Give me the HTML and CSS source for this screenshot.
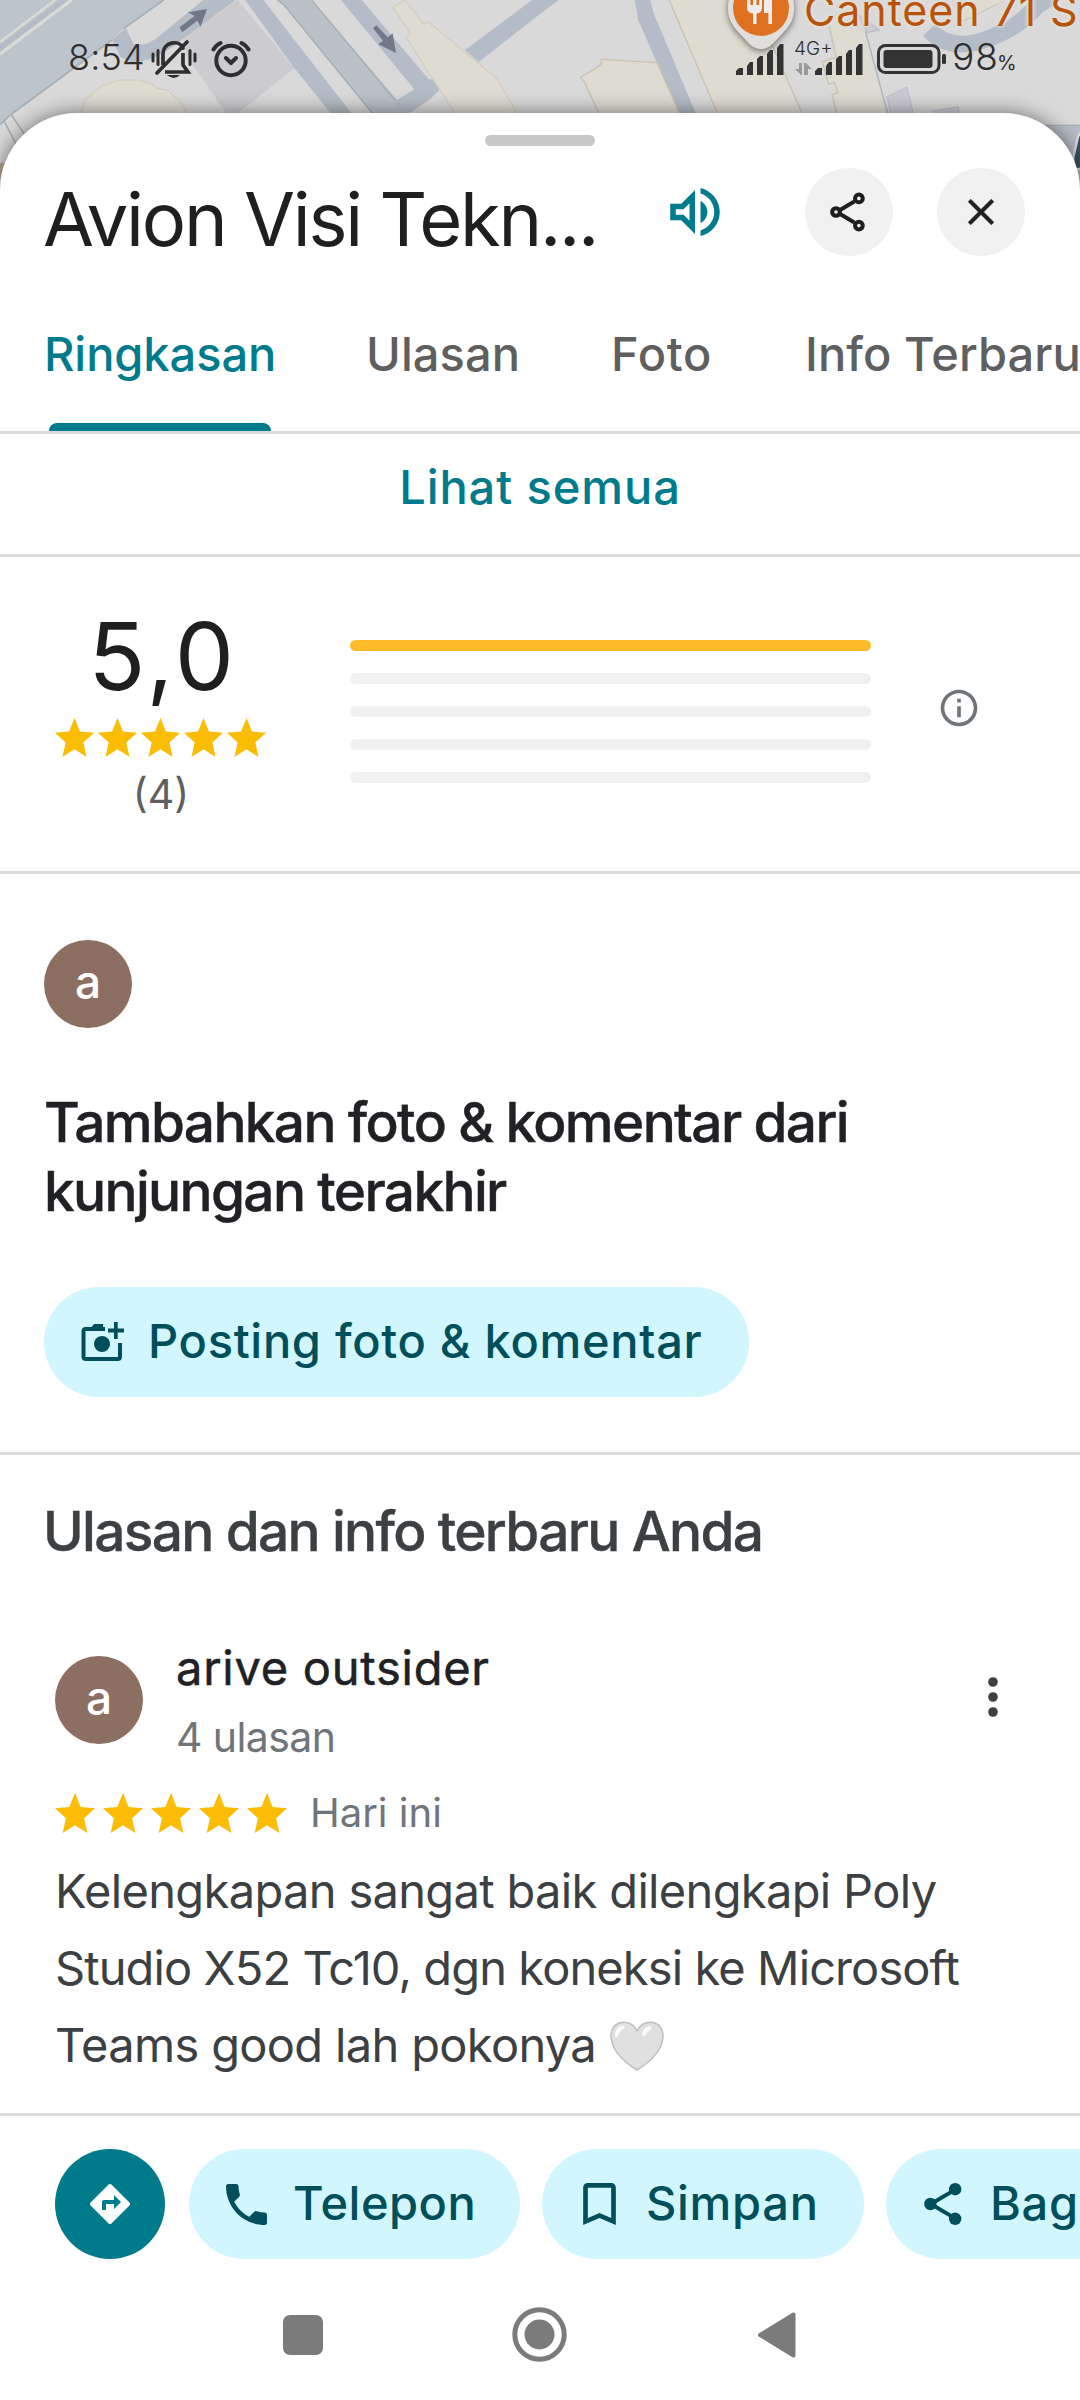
FILE: index.html
```
<!DOCTYPE html>
<html lang="id">
<head>
<meta charset="utf-8">
<title>Avion Visi Teknologi</title>
<link rel="stylesheet" href="styles.css">
</head>
<body>
<svg class="defs" width="0" height="0" aria-hidden="true">
  <defs>
    <symbol id="star" viewBox="2 2 20 19" preserveAspectRatio="none"><path d="M12 17.27L18.18 21l-1.64-7.03L22 9.24l-7.19-.61L12 2 9.19 8.63 2 9.24l5.46 4.73L5.82 21z"/></symbol>
  </defs>
</svg>
<div class="screen">
  <header class="map">
    <svg class="map-canvas" width="1080" height="200" viewBox="0 0 1080 200">
      <rect width="1080" height="200" fill="#d9d9d9"/>
      <g transform="scale(.3444 .3333)">
        <path fill="#bdc5cc" d="M0 0H475L360 85 325 120 30 345 0 372z"/>
        <path d="M475 0L360 85M325 120L30 345 0 374" stroke="#a5b0b5" stroke-width="5" fill="none"/>
        <path d="M0 150L205 -5" stroke="#b4bdc7" stroke-width="26"/>
        <path d="M0 126L160 0" stroke="#dadcda" stroke-width="7"/>
        <path d="M0 162L208 0" stroke="#dadcda" stroke-width="10"/>
        <path fill="#b4bdc7" d="M325 120L365 85 388 132Q425 140 460 110L590 0H685L525 122Q440 190 380 186L350 170z"/>
        <path fill="#cbcbd0" d="M690 0L855 205 690 340H657L540 165 535 115z"/>
        <path fill="#b4bdc7" d="M712 0H765L1022 342H962L855 205z"/>
        <path fill="#bac2c8" d="M805 0H905L1188 342H1083L825 15z"/>
        <path d="M805 0L825 15 1083 342M905 0L1150 305" stroke="#a5afb3" stroke-width="4" fill="none"/>
        <path fill="#b4bdc7" d="M990 0H1050L1245 238H1265L1278 268 1250 296 1185 342 1140 308 1203 268z"/>
        <path fill="#b4bdc7" d="M1350 150L1545 0H1568V42L1390 186z"/>
        <path fill="#dedbd1" stroke="#d3cbb8" stroke-width="3" d="M1175 0L1230 72 1242 65 1442 235 1502 342H1322L1178 110 1192 98 1140 22z"/>
        <path fill="#dedbd1" stroke="#d3cbb8" stroke-width="3" d="M233 342L248 300 295 258 345 240H405L440 252 455 265 485 270 520 302 545 342z"/>
        <path d="M10 360L48 435M34 346L72 405" stroke="#a8b0b5" stroke-width="5"/>
        <path fill="#707987" d="M521 82L565 48 546 37 601 27 582 80 573 62 529 97zM1083 85L1093 76 1126 112 1140 100 1150 159 1098 133 1112 122z"/>
        <path fill="#b7a995" d="M0 490L12 486 0 540z"/>
      </g>
      <g transform="translate(540) scale(.3444 .3333)">
        <path fill="#b4bdc7" d="M0 0H55L0 42z"/>
        <path fill="#b4bdc7" d="M275 0H320L330 40 453 342H405L285 60z"/>
        <path fill="#dedbd1" d="M375 0H590L762 342H516z"/>
        <path d="M375 0L516 342M672 130L762 342" stroke="#cbc2b0" stroke-width="4"/>
        <path fill="#dedbd1" stroke="#cbc2b0" stroke-width="4" d="M172 342L130 248 118 232 178 194V178L340 188 406 342z"/>
        <path fill="#dedbd1" d="M838 78L945 95 1010 342H862L848 285 865 278 855 248 838 252 820 185 860 172z"/>
        <path d="M840 80L860 172 820 185 838 252 855 248 865 278 848 285 862 342M1225 65L1350 0" stroke="#cbc2b0" stroke-width="4" fill="none"/>
        <path fill="#dedbd1" d="M1240 0H1350L1210 70z"/>
        <path d="M945 95L1010 342" stroke="#a9b6c4" stroke-width="4"/>
        <path fill="#cbcbd2" stroke="#bcbccb" stroke-width="3" d="M1008 290L1065 262 1085 342H1018zM1140 334L1215 320 1218 342H1145zM920 40L985 90 950 98z"/>
        <path d="M1130 90Q1190 155 1290 120T1440 20L1500 -20" stroke="#b4bdc7" stroke-width="50" fill="none"/>
        <path fill="#b7bdc6" stroke="#a1a8b0" stroke-width="3" d="M1465 376H1580V600H1465z"/>
        <path fill="#3d5063" stroke="#dde0e0" stroke-width="7" d="M1590 370L1562 410 1548 475 1552 510 1590 500z"/>
      </g>
      <g class="pin">
        <path fill="#e1dfdb" d="M728 5a33 33 0 0 1 66 4c0 12-6 19-13 26-7 7-11 14-20 14s-13-7-20-14c-7-7-13-15-13-26z"/>
      </g>
      <circle cx="761" cy="8" r="28" fill="#df7120"/>
      <path fill="#ededed" d="M747-4h3.300V5h2.700V-4h3.500V5h2.700V-4h2.800V7q0 6-5.500 6.500V24h-3.500V13.500Q747 13 747 7zM764-4h8V24h-3.600V13H764z"/>
    </svg>
    <span class="map-label">Canteen 71 S</span>
    <div class="statusbar">
      <span class="clock">8:54</span>
      <svg class="ic-mute" width="46" height="40" viewBox="0 0 46 40">
        <g fill="none" stroke="#2f2f2f" stroke-width="3.700">
          <path d="M12 24V14C12 2 28-1 32 8M6 33L36 2" stroke-linecap="round"/>
          <path d="M14 32H37L32 25V13" />
          <path d="M2 14v7M7 10.500v14M39 10.500v14M44 14v7" stroke-width="3" stroke-linecap="round"/>
        </g>
        <path d="M16 35h13q-6 6-13 0z" fill="#2f2f2f"/>
      </svg>
      <svg class="ic-alarm" width="40" height="38" viewBox="0 0 40 38">
        <g fill="none" stroke="#2f2f2f" stroke-width="4" stroke-linecap="round" stroke-linejoin="round">
          <circle cx="20" cy="20.500" r="14.700"/>
          <path d="M15 18l5 5 5-5M2.500 9.500Q5 5 9.500 3M37.500 9.500Q35 5 30.500 3"/>
        </g>
      </svg>
      <span class="spacer"></span>
      <svg class="ic-signal" width="48" height="31" viewBox="0 0 48 31"><path fill="#333" d="M0 31V27l3-3h4v7zM11 31V22l3-4h3v13zM21 31V15l3-3h3v19zM31 31V10l3-4h3v25zM41 31V4l3-4h3.500v31z"/></svg>
      <span class="net">
        <span class="net-type">4G+</span>
        <svg width="17" height="12" viewBox="0 0 17 12"><path fill="#9a9a9a" d="M0 6h4V0h3v12H6zM9 0h2l6 6h-4v6H9z"/></svg>
      </span>
      <svg class="ic-signal2" width="48" height="31" viewBox="0 0 48 31"><path fill="#333" d="M0 31V27l3-3h4v7zM11 31V22l3-4h3v13zM21 31V15l3-3h3v19zM31 31V10l3-4h3v25zM41 31V4l3-4h3.500v31z"/></svg>
      <svg class="ic-battery" width="70" height="30" viewBox="0 0 70 30"><rect x="1.500" y="1.500" width="60.500" height="27" rx="7" fill="none" stroke="#333" stroke-width="3"/><rect x="6.500" y="6" width="49" height="18" rx="3" fill="#333"/><rect x="65" y="10" width="4" height="10" rx="1.500" fill="#333"/></svg>
      <span class="batt">98</span><span class="pct">%</span>
    </div>
  </header>

  <main class="sheet">
    <div class="handle"></div>
    <div class="head">
      <h1 class="title">Avion Visi Tekn...</h1>
      <svg class="ic-speaker" width="66" height="66" viewBox="0 0 24 24"><path fill="#007b8b" fill-rule="evenodd" d="M3 9v6h4l5 5V4L7 9zm7-.17v6.340L7.830 13H5v-2h2.830zM14 7.970v8.050c1.480-.73 2.500-2.250 2.500-4.020S15.480 8.710 14 7.970zM14 3.230v2.060c2.890.86 5 3.540 5 6.710s-2.110 5.850-5 6.710v2.060c4.010-.91 7-4.490 7-8.770s-2.990-7.860-7-8.770z"/></svg>
      <span class="round share">
        <svg width="44" height="44" viewBox="0.600 0 24 24" fill="none" stroke="#1f1f1f" stroke-width="2.200"><path d="M7.500 11L15.500 6.300M7.500 13L15.500 17.700"/><circle cx="18" cy="4.600" r="2.100"/><circle cx="5.500" cy="12" r="2.100"/><circle cx="18" cy="19.400" r="2.100"/></svg>
      </span>
      <span class="round">
        <svg width="44" height="44" viewBox="0 0 24 24"><path fill="#1f1f1f" stroke="#1f1f1f" stroke-width=".3" d="M19 6.410L17.590 5 12 10.590 6.410 5 5 6.410 10.590 12 5 17.590 6.410 19 12 13.410 17.590 19 19 17.590 13.410 12z"/></svg>
      </span>
    </div>
    <nav class="tabs">
      <span class="tab active">Ringkasan</span>
      <span class="tab t2">Ulasan</span>
      <span class="tab t3">Foto</span>
      <span class="tab t4">Info Terbaru</span>
    </nav>
    <div class="see-all">Lihat semua</div>

    <section class="rating">
      <div class="score-col">
        <div class="score">5,0</div>
        <div class="stars tight">
          <svg><use href="#star"/></svg><svg><use href="#star"/></svg><svg><use href="#star"/></svg><svg><use href="#star"/></svg><svg><use href="#star"/></svg>
        </div>
        <div class="count">(4)</div>
      </div>
      <div class="bars">
        <div class="bar full"></div><div class="bar"></div><div class="bar"></div><div class="bar"></div><div class="bar"></div>
      </div>
      <svg class="ic-info" width="44" height="44" viewBox="0 0 24 24"><path fill="#70757a" d="M11 7h2v2h-2zm0 4h2v6h-2zm1-9C6.480 2 2 6.480 2 12s4.480 10 10 10 10-4.480 10-10S17.520 2 12 2zm0 18c-4.410 0-8-3.590-8-8s3.590-8 8-8 8 3.590 8 8-3.590 8-8 8z"/></svg>
    </section>

    <section class="prompt">
      <div class="avatar">a</div>
      <h2>Tambahkan foto &amp; komentar dari<br>kunjungan terakhir</h2>
      <span class="pill post">
        <svg width="44" height="40" viewBox="0 0 44 40"><path d="M24 7H4.500Q2.500 7 2.500 9.500V34.500Q2.500 37 5 37H36.500Q39 37 39 34.500V21" fill="none" stroke="#004f5a" stroke-width="4"/><path fill="#004f5a" d="M9 7L13 2H22V9H9zM33 0h3.700v6.500H43v4H36.700V17H33V10.500H27v-4h6z"/><circle cx="21" cy="22" r="8" fill="#004f5a"/></svg>
        <span>Posting foto &amp; komentar</span>
      </span>
    </section>

    <section class="reviews">
      <h2>Ulasan dan info terbaru Anda</h2>
      <div class="reviewer">
        <div class="avatar">a</div>
        <div class="who">
          <div class="name">arive outsider</div>
          <div class="sub">4 ulasan</div>
        </div>
        <svg class="ic-more" width="12" height="44" viewBox="0 0 12 44" fill="#3c4043"><circle cx="6" cy="7" r="4.800"/><circle cx="6" cy="22" r="4.800"/><circle cx="6" cy="37" r="4.800"/></svg>
      </div>
      <div class="when">
        <div class="stars">
          <svg><use href="#star"/></svg><svg><use href="#star"/></svg><svg><use href="#star"/></svg><svg><use href="#star"/></svg><svg><use href="#star"/></svg>
        </div>
        <span>Hari ini</span>
      </div>
      <p class="text">Kelengkapan sangat baik dilengkapi Poly<br><span class="snug">Studio X52 Tc10, dgn koneksi ke Microsoft</span><br>Teams good lah pokonya
        <svg class="heart" width="54" height="50" viewBox="0 0 54 50"><path fill="#e0e0e0" stroke="#bdbdbd" stroke-width="1.500" d="M27 10C31 2 38 .8 43 1.500 50 3 53.500 9 53 16 52 30 40 41 27 49 14 41 2 30 1 16 .5 9 4 3 11 1.500 16 .8 23 2 27 10z"/><path fill="#fafafa" d="M5 14Q5 7 11 5q5-1 3 3-5 2-6 7-2 3-3-1zM32 13q1-6 7-8 5 0 1 4-3 2-4 5-3 3-4-1z"/></svg></p>
    </section>

    <footer class="actions">
      <span class="go"><svg width="42" height="42" viewBox="1.500 1.500 21 21"><path fill="#fff" d="M21.710 11.290l-9-9c-.39-.39-1.020-.39-1.410 0l-9 9c-.39.39-.39 1.020 0 1.410l9 9c.39.39 1.020.39 1.410 0l9-9c.39-.38.39-1.010 0-1.410zM14 14.500V12h-4v3H8v-4c0-.55.45-1 1-1h5V7.500l3.500 3.500z"/></svg></span>
      <span class="pill call"><svg width="41" height="41" viewBox="3 3 18 18"><path fill="#004f5a" d="M6.620 10.790c1.440 2.830 3.760 5.140 6.590 6.590l2.200-2.200c.27-.27.67-.36 1.020-.24 1.120.37 2.330.57 3.570.57.55 0 1 .45 1 1V20c0 .55-.45 1-1 1-9.390 0-17-7.610-17-17 0-.55.45-1 1-1h3.500c.55 0 1 .45 1 1 0 1.250.2 2.450.57 3.570.11.35.03.74-.25 1.020z"/></svg><span>Telepon</span></span>
      <span class="pill save"><svg width="33" height="42" viewBox="5 3 14 18"><path fill="#004f5a" d="M17 3H7c-1.100 0-1.990.9-1.990 2L5 21l7-3 7 3V5c0-1.100-.9-2-2-2zm0 15l-5-2.180L7 18V5h10z"/></svg><span>Simpan</span></span>
      <span class="pill send"><svg width="38" height="42" viewBox="2.500 2.500 17 19"><path d="M5.500 12L16.500 5.500M5.500 12L16.500 18.500" stroke="#004f5a" stroke-width="1.800"/><g fill="#004f5a"><circle cx="16.500" cy="5.300" r="2.800"/><circle cx="5.300" cy="12" r="2.800"/><circle cx="16.500" cy="18.700" r="2.800"/></g></svg><span>Bagikan</span></span>
    </footer>
    <nav class="sysnav">
      <svg width="40" height="40"><rect width="40" height="40" rx="7" fill="#7b7b7b"/></svg>
      <svg width="55" height="55" viewBox="0 0 55 55"><circle cx="27.500" cy="27.500" r="24.700" fill="none" stroke="#7b7b7b" stroke-width="5"/><circle cx="27.500" cy="27.500" r="15" fill="#7b7b7b"/></svg>
      <svg class="back" width="38" height="46" viewBox="0 0 38 46"><path fill="#7b7b7b" stroke="#7b7b7b" stroke-width="4" stroke-linejoin="round" d="M2 23L35.500 2.500V43.500z"/></svg>
    </nav>
  </main>
</div>
</body>
</html>
```
FILE: styles.css
```
* { box-sizing: border-box; }
body { margin: 0; background: #fff; font-family: Inter, Roboto, sans-serif; font-weight: 400; }
h1, h2, p { margin: 0; font-weight: inherit; }
svg { display: block; flex: none; }
.defs { position: absolute; }

.screen { width: 1080px; height: 2400px; overflow: hidden; display: flex; flex-direction: column; }

/* map strip with the status bar over it */
.map { position: relative; height: 113px; flex: none; }
.map-canvas { position: absolute; left: 0; top: 0; }
.pin { filter: drop-shadow(0 2px 3px rgba(0, 0, 0, .5)); }
.map-label {
  position: absolute; left: 804px; top: -21px; white-space: nowrap;
  font-size: 43px; line-height: 62px; letter-spacing: .9px; color: #b9530a;
  text-shadow: 0 0 4px #e4e0da, 0 0 4px #e4e0da, 0 0 3px #e4e0da;
}
.statusbar { position: relative; display: flex; align-items: flex-start; padding: 0 66px 0 68px; height: 113px; color: #2f2f2f; }
.spacer { flex: 1; }
.clock { font-weight: 300; font-size: 36px; line-height: 40px; margin-top: 37px; width: 83px; letter-spacing: .16px; }
.ic-mute { margin-top: 40px; }
.ic-alarm { margin: 40px 0 0 14px; }
.ic-signal { margin-top: 44px; }
.net { margin: 37px 0 0 10px; width: 40px; }
.net-type { display: block; font-weight: 300; font-size: 19px; line-height: 24px; }
.net svg { margin: 2px 0 0 1px; }
.ic-signal2 { margin: 44px 0 0 -19px; }
.ic-battery { margin: 44px 5px 0 14px; }
.batt { font-weight: 300; font-size: 37px; line-height: 40px; margin-top: 37px; letter-spacing: 1px; }
.pct { font-size: 20px; line-height: 24px; margin: 51px 0 0 -2px; width: 17px; }

/* bottom sheet */
.sheet {
  position: relative; flex: 1; display: flex; flex-direction: column; background: #fff;
  border-radius: 77px 77px 0 0; padding-top: 22px; box-shadow: 0 0 20px rgba(0, 0, 0, .5);
}
.handle { width: 110px; height: 11px; margin: 0 auto; border-radius: 6px; background: #c7c7c7; }
.head { display: flex; height: 88px; margin-top: 22px; padding: 0 55px 0 43px; }
.title { width: 619px; padding-top: 14px; font-size: 74px; line-height: 74px; letter-spacing: -2.25px; color: #1f1f1f; white-space: nowrap; }
.ic-speaker { margin-top: 11px; }
.round { width: 88px; height: 88px; border-radius: 50%; background: #f1f1f1; display: grid; place-items: center; flex: none; }
.share { margin: 0 44px 0 77px; }
.tabs { display: flex; height: 178px; padding-left: 44px; border-bottom: 3px solid #dadce0; overflow: hidden; }
.tab { position: relative; flex: none; padding-top: 20px; height: 175px; font-weight: 500; font-size: 47px; line-height: 155px; letter-spacing: .1px; color: #5f5f5f; white-space: nowrap; }
.tab.active { width: 322px; color: #007b8b; letter-spacing: -.08px; }
.tab.active::after { content: ""; position: absolute; left: 5px; bottom: 0; width: 222px; height: 8px; border-radius: 8px 8px 0 0; background: #007b8b; }
.t2 { width: 245px; }
.t3 { width: 194px; letter-spacing: .7px; }
.see-all { height: 123px; border-bottom: 3px solid #dadce0; text-align: center; font-weight: 500; font-size: 47px; line-height: 105px; letter-spacing: .92px; color: #007b8b; }

.rating { display: flex; height: 317px; padding-left: 55px; border-bottom: 3px solid #dadce0; }
.score-col { width: 212px; padding-top: 44px; text-align: center; }
.score { font-size: 94px; line-height: 110px; letter-spacing: 3.6px; color: #1f1f1f; padding-left: 4px; }
.stars { display: flex; gap: 8px; }
.stars svg { width: 40px; height: 40px; fill: #fbbc04; }
.stars.tight { gap: 4px; margin-top: 7px; }
.stars.tight svg { width: 39px; height: 39px; }
.count { margin-top: 12px; font-size: 41px; line-height: 50px; color: #5f5f5f; }
.bars { display: flex; flex-direction: column; gap: 22px; width: 521px; margin: 83px 66px 0 83px; }
.bar { height: 11px; border-radius: 6px; background: #f1f1f1; }
.bar.full { background: #ffbb29; }
.ic-info { margin-top: 129px; }

.avatar { flex: none; width: 88px; height: 88px; border-radius: 50%; background: #8d6e63; color: #fff; text-align: center; font-weight: 500; font-size: 46px; line-height: 82px; }
.prompt { height: 581px; padding: 66px 44px 0; border-bottom: 3px solid #dadce0; }
.prompt h2 { margin-top: 60px; font-weight: 500; font-size: 55px; line-height: 69px; letter-spacing: -1.67px; color: #202124; -webkit-text-stroke: .4px; }
.pill { display: inline-flex; align-items: center; flex: none; height: 110px; border-radius: 55px; background: #d1f6fe; color: #004f5a; font-weight: 500; font-size: 47px; line-height: 110px; letter-spacing: .7px; white-space: nowrap; }
.post { width: 705px; margin-top: 61px; padding-left: 37px; gap: 23px; }
.post span { position: relative; top: -1px; }

.reviews { height: 658px; padding: 42px 55px 0; }
.reviews h2 { margin-left: -12px; font-weight: 500; font-size: 55px; line-height: 69px; letter-spacing: -1.68px; color: #3c4043; -webkit-text-stroke: .4px; }
.reviewer { display: flex; height: 123px; margin-top: 73px; }
.reviewer .avatar { margin-top: 17px; }
.who { flex: 1; padding-left: 33px; }
.name { font-size: 47px; line-height: 58px; letter-spacing: .75px; color: #202124; -webkit-text-stroke: .5px; }
.sub { margin-top: 15px; font-size: 41px; line-height: 50px; letter-spacing: -.6px; color: #70757a; }
.ic-more { margin: 36px 26px 0 0; }
.when { display: flex; height: 40px; margin-top: 31px; }
.when span { margin-left: 23px; font-size: 40px; line-height: 40px; color: #70757a; }
.text { margin-top: 19px; font-size: 47px; line-height: 77px; letter-spacing: -.66px; color: #3c4043; white-space: nowrap; }
.snug { letter-spacing: -.9px; }
.heart { display: inline-block; vertical-align: -9px; margin-left: 1px; }

.actions { display: flex; height: 146px; padding: 33px 0 0 55px; border-top: 3px solid #dadce0; overflow: hidden; flex: none; }
.go { width: 110px; height: 110px; border-radius: 50%; background: #007b8b; display: grid; place-items: center; margin-right: 24px; flex: none; }
.actions .pill span { position: relative; top: -1px; }
.call { width: 331px; margin-right: 22px; padding-left: 37px; gap: 26px; letter-spacing: .5px; }
.save { width: 322px; margin-right: 22px; padding-left: 41px; gap: 30px; }
.send { width: 330px; padding-left: 38px; gap: 28px; }
.sysnav { display: flex; align-items: center; height: 141px; padding: 10px 0 0 283px; gap: 189px; }
.sysnav .back { margin-left: 2px; }
```
